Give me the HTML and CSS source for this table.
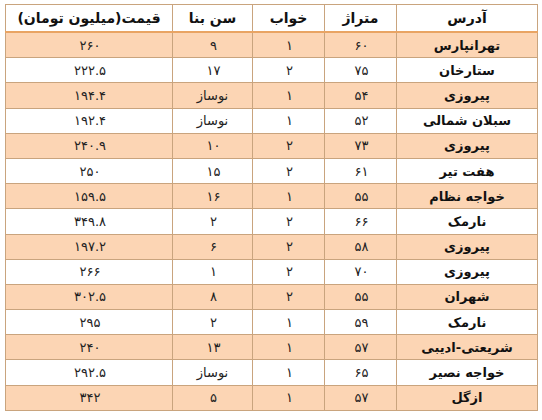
FILE: index.html
```html
<!DOCTYPE html>
<html lang="fa" dir="rtl">
<head>
<meta charset="utf-8">
<link rel="stylesheet" href="styles.css">
</head>
<body>
<table class="grid">
  <colgroup>
    <col class="c-addr"><col class="c-area"><col class="c-bed"><col class="c-age"><col class="c-price">
  </colgroup>
  <thead>
    <tr><th>آدرس</th><th>متراژ</th><th>خواب</th><th>سن بنا</th><th>قیمت(میلیون تومان)</th></tr>
  </thead>
  <tbody>
    <tr><td class="addr">تهرانپارس</td><td>۶۰</td><td>۱</td><td>۹</td><td>۲۶۰</td></tr>
    <tr><td class="addr">ستارخان</td><td>۷۵</td><td>۲</td><td>۱۷</td><td>۲۲۲.۵</td></tr>
    <tr><td class="addr">پیروزی</td><td>۵۴</td><td>۱</td><td class="word">نوساز</td><td>۱۹۴.۴</td></tr>
    <tr><td class="addr">سبلان شمالی</td><td>۵۲</td><td>۱</td><td class="word">نوساز</td><td>۱۹۲.۴</td></tr>
    <tr><td class="addr">پیروزی</td><td>۷۳</td><td>۲</td><td>۱۰</td><td>۲۴۰.۹</td></tr>
    <tr><td class="addr">هفت تیر</td><td>۶۱</td><td>۲</td><td>۱۵</td><td>۲۵۰</td></tr>
    <tr><td class="addr">خواجه نظام</td><td>۵۵</td><td>۱</td><td>۱۶</td><td>۱۵۹.۵</td></tr>
    <tr><td class="addr">نارمک</td><td>۶۶</td><td>۲</td><td>۲</td><td>۳۴۹.۸</td></tr>
    <tr><td class="addr">پیروزی</td><td>۵۸</td><td>۲</td><td>۶</td><td>۱۹۷.۲</td></tr>
    <tr><td class="addr">پیروزی</td><td>۷۰</td><td>۲</td><td>۱</td><td>۲۶۶</td></tr>
    <tr><td class="addr">شهران</td><td>۵۵</td><td>۲</td><td>۸</td><td>۳۰۲.۵</td></tr>
    <tr><td class="addr">نارمک</td><td>۵۹</td><td>۱</td><td>۲</td><td>۲۹۵</td></tr>
    <tr><td class="addr">شریعتی-ادیبی</td><td>۵۷</td><td>۱</td><td>۱۳</td><td>۲۴۰</td></tr>
    <tr><td class="addr">خواجه نصیر</td><td>۶۵</td><td>۱</td><td class="word">نوساز</td><td>۲۹۲.۵</td></tr>
    <tr><td class="addr">ازگل</td><td>۵۷</td><td>۱</td><td>۵</td><td>۳۴۲</td></tr>
  </tbody>
</table>
</body>
</html>
```
FILE: styles.css
```css
html, body {
  margin: 0;
  background: #ffffff;
}
body {
  padding: 4px 4px 0 6px;
  font-family: "DejaVu Sans", sans-serif;
  color: #222;
}
.grid {
  border-collapse: collapse;
  table-layout: fixed;
  width: 532px;
}
.c-addr { width: 141px; }
.c-area { width: 72px; }
.c-bed { width: 72px; }
.c-age { width: 80px; }
.c-price { width: 167px; }
.grid th, .grid td {
  border: 1px solid #c9a47e;
  text-align: center;
  padding: 0;
  white-space: nowrap;
}
.grid th {
  height: 26px;
  font-size: 14px;
  font-weight: bold;
  color: #111;
  border-bottom: 2px solid #e9a463;
}
.grid td {
  height: 24.2px;
  font-size: 13px;
  letter-spacing: 2px;
  padding-left: 2px;
}
.grid td.word {
  letter-spacing: 0;
  padding-left: 0;
}
.grid td.addr {
  letter-spacing: 0;
  padding-left: 0;
  font-weight: bold;
  font-size: 13px;
  color: #111;
}
.grid tbody tr:nth-child(odd) td {
  background: #fcd5b4;
}
```
